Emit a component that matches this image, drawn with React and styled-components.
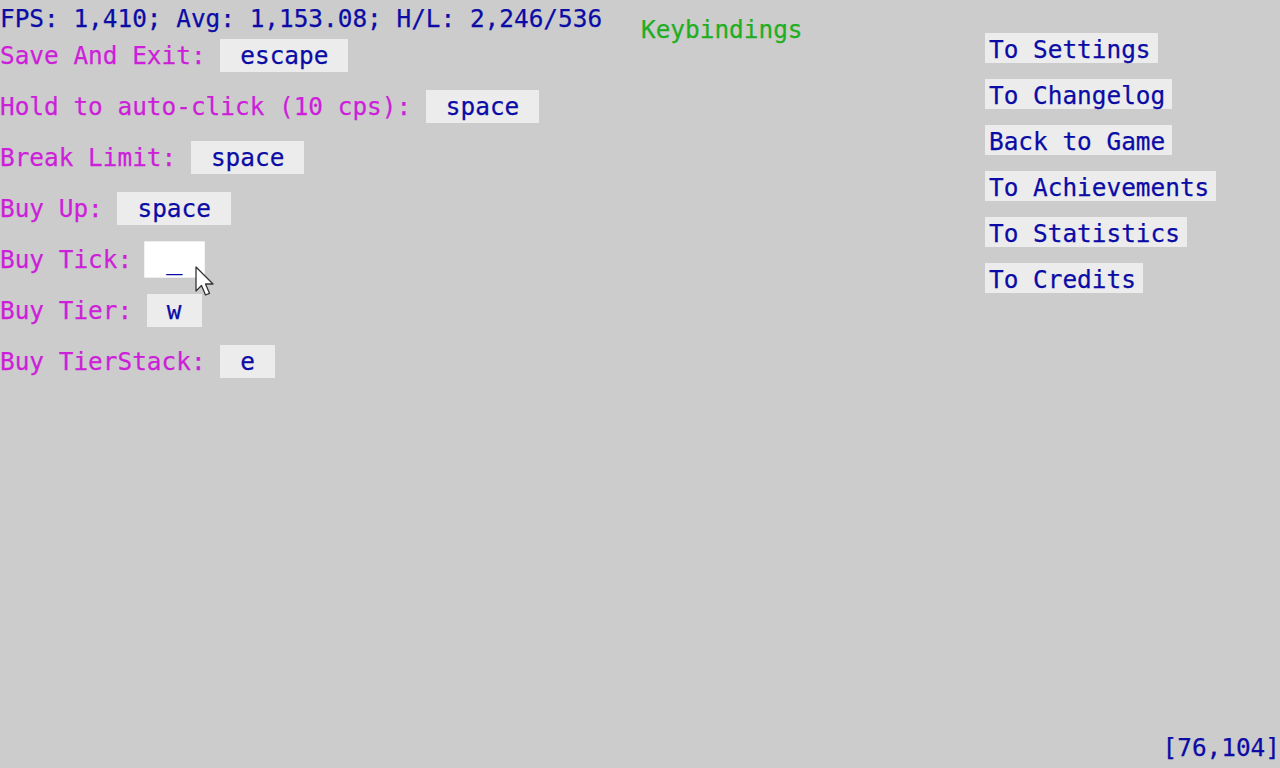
import * as React from "react";
import styled, { createGlobalStyle } from "styled-components";

const bindings = [
  { label: "Save And Exit: ", key: "escape" },
  { label: "Hold to auto-click (10 cps): ", key: "space" },
  { label: "Break Limit: ", key: "space" },
  { label: "Buy Up: ", key: "space" },
  { label: "Buy Tick: ", key: "_", hovered: true },
  { label: "Buy Tier: ", key: "w" },
  { label: "Buy TierStack: ", key: "e" },
];

const navLinks = [
  "To Settings",
  "To Changelog",
  "Back to Game",
  "To Achievements",
  "To Statistics",
  "To Credits",
];

export default function App() {
  return (
    <>
      <GlobalStyle />
      <StyledPage>
        <StyledMain>
          <StyledLeft>
            <StyledStats>FPS: 1,410; Avg: 1,153.08; H/L: 2,246/536</StyledStats>
            <StyledBindList>
              {bindings.map((b) => (
                <StyledBindRow key={b.label}>
                  <StyledLabel>{b.label}</StyledLabel>
                  <StyledKeyBox $hovered={b.hovered}>{b.key}</StyledKeyBox>
                  {b.hovered && <Cursor />}
                </StyledBindRow>
              ))}
            </StyledBindList>
          </StyledLeft>
          <StyledTitle>Keybindings</StyledTitle>
          <StyledNav>
            {navLinks.map((text) => (
              <StyledNavButton key={text}>{text}</StyledNavButton>
            ))}
          </StyledNav>
        </StyledMain>
        <StyledFooter>[76,104]</StyledFooter>
      </StyledPage>
    </>
  );
}

function Cursor() {
  return (
    <StyledCursor width="22" height="32" viewBox="0 0 22 32">
      <path
        d="M1 1 L1 25 L6.5 19.5 L10.5 29 L14.5 27.3 L10.5 18 L18 18 Z"
        fill="#ffffff"
        stroke="#333"
        strokeWidth="1.3"
        strokeLinejoin="round"
      />
    </StyledCursor>
  );
}

const GlobalStyle = createGlobalStyle`
  html, body {
    margin: 0;
    padding: 0;
    background: #cccccc;
  }
  body {
    font-family: "DejaVu Sans Mono", "Liberation Mono", monospace;
    font-size: 24.4px;
    line-height: 30px;
    color: #0b0ba6;
    -webkit-text-stroke: 0.25px currentColor;
  }
`;

const StyledPage = styled.div`
  min-height: 100vh;
  display: flex;
  flex-direction: column;
  justify-content: space-between;
  box-sizing: border-box;
`;

const StyledMain = styled.div`
  display: grid;
  grid-template-columns: 641px 344px 1fr;
  align-items: start;
`;

const StyledLeft = styled.div`
  display: flex;
  flex-direction: column;
`;

const StyledStats = styled.div`
  padding-top: 4px;
  white-space: pre;
`;

const StyledBindList = styled.div`
  display: flex;
  flex-direction: column;
  gap: 18px;
  margin-top: 4.5px;
`;

const StyledBindRow = styled.div`
  position: relative;
  display: flex;
  align-items: center;
  height: 33px;
  line-height: 35px;
`;

const StyledLabel = styled.span`
  color: #cc1fd9;
  white-space: pre;
`;

const StyledKeyBox = styled.span`
  display: inline-flex;
  align-items: center;
  height: 33px;
  padding: 0 20px;
  background: ${(p) => (p.$hovered ? "#ffffff" : "#ececec")};
  color: #0b0ba6;
  transform: ${(p) => (p.$hovered ? "scale(1.1)" : "none")};
`;

const StyledCursor = styled.svg`
  position: absolute;
  left: 195px;
  top: 23px;
  pointer-events: none;
`;

const StyledTitle = styled.div`
  padding-top: 15px;
  color: #1fae1f;
`;

const StyledNav = styled.div`
  display: flex;
  flex-direction: column;
  align-items: flex-start;
  gap: 16px;
  padding-top: 33px;
`;

const StyledNavButton = styled.span`
  display: inline-block;
  height: 30px;
  line-height: 33px;
  padding: 0 7px 0 4px;
  background: #ececec;
  color: #0b0ba6;
  white-space: pre;
`;

const StyledFooter = styled.div`
  text-align: right;
  padding-bottom: 5px;
`;
